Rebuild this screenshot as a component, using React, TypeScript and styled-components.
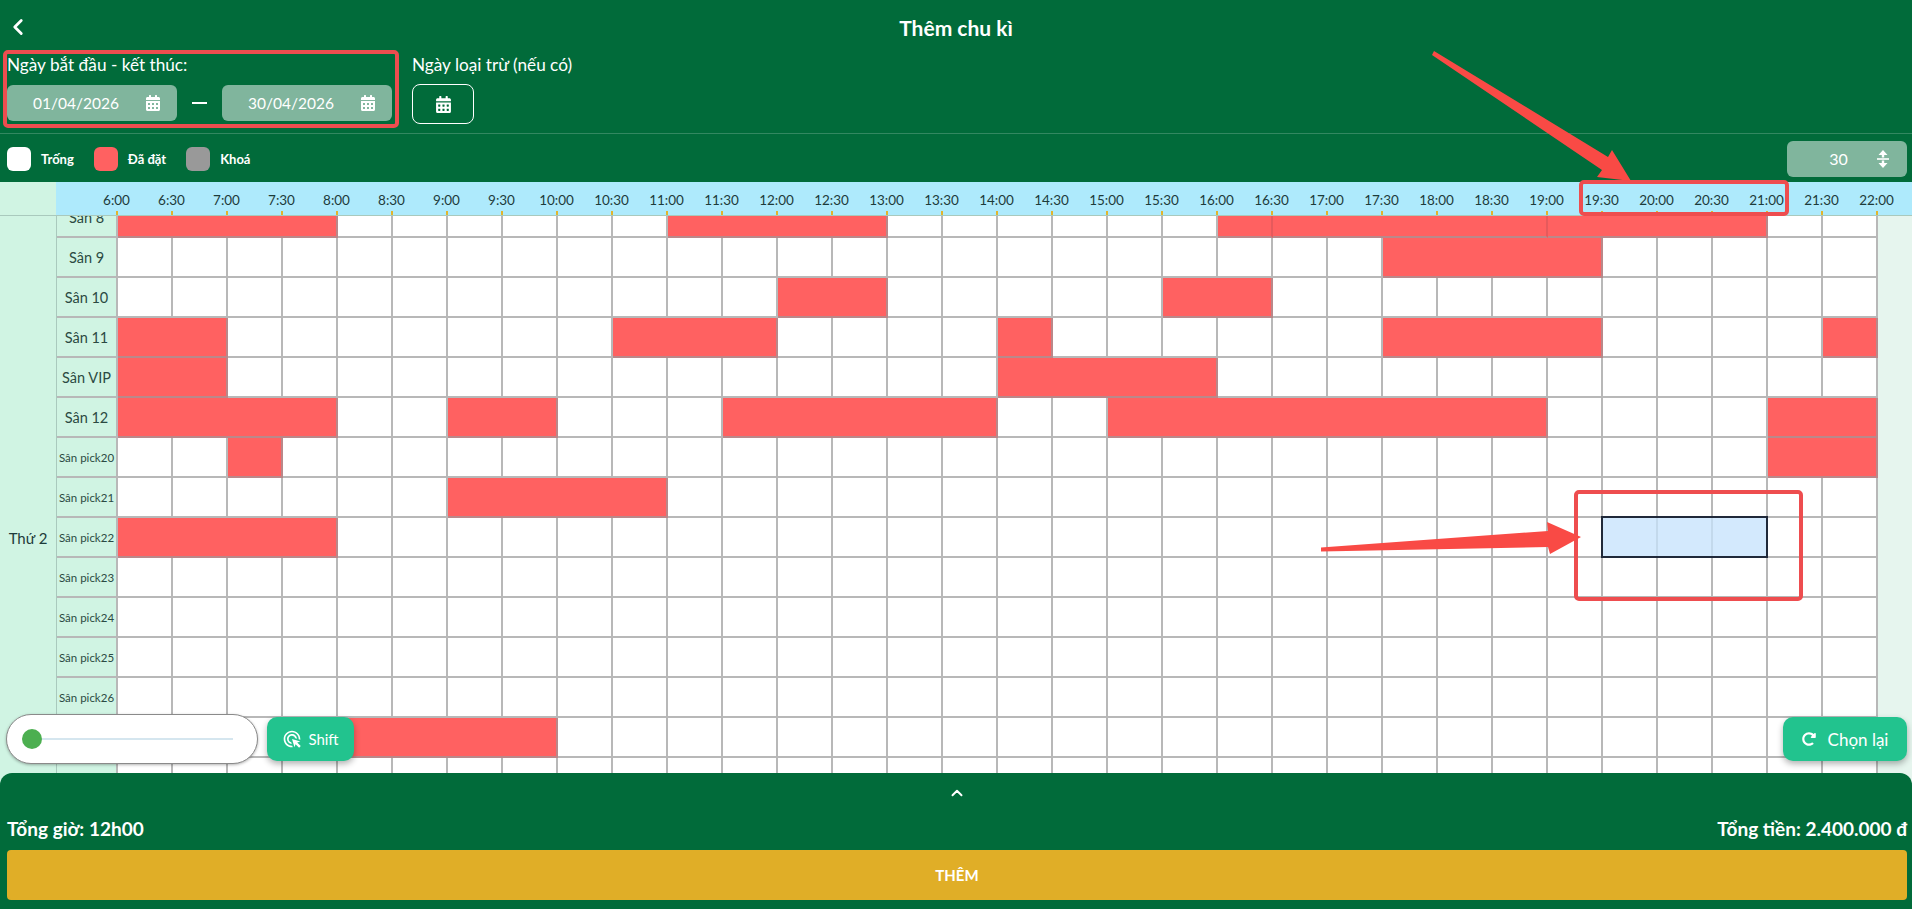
import styled, { createGlobalStyle } from "styled-components";
import { ChevronLeft, ChevronUp } from "lucide-react";
import { FaCalendarAlt, FaRedoAlt } from "react-icons/fa";
import { MdAdsClick } from "react-icons/md";

const GREEN = "#016b3a";
const RED = "#ff6161";
const LINE = "#b8b8b8";
const MINT = "#d0f4e3";
const TEAL = "#22c38e";

type Block = { from: number; to: number; joined?: boolean };

type Court = {
    name: string;
    small?: boolean;
    booked?: Block[];
    selected?: Block;
};

const courts: Court[] = [
    {
        name: "Sân 8",
        booked: [
            { from: 0, to: 4 },
            { from: 10, to: 14 },
            { from: 20, to: 21, joined: true },
            { from: 21, to: 26, joined: true },
            { from: 26, to: 30 },
        ],
    },
    { name: "Sân 9", booked: [{ from: 23, to: 27 }] },
    {
        name: "Sân 10",
        booked: [
            { from: 12, to: 14 },
            { from: 19, to: 21 },
        ],
    },
    {
        name: "Sân 11",
        booked: [
            { from: 0, to: 2 },
            { from: 9, to: 12 },
            { from: 16, to: 17 },
            { from: 23, to: 27 },
            { from: 31, to: 32 },
        ],
    },
    {
        name: "Sân VIP",
        booked: [
            { from: 0, to: 2 },
            { from: 16, to: 20 },
        ],
    },
    {
        name: "Sân 12",
        booked: [
            { from: 0, to: 4 },
            { from: 6, to: 8 },
            { from: 11, to: 16 },
            { from: 18, to: 26 },
            { from: 30, to: 32 },
        ],
    },
    {
        name: "Sân pick20",
        small: true,
        booked: [
            { from: 2, to: 3 },
            { from: 30, to: 32 },
        ],
    },
    { name: "Sân pick21", small: true, booked: [{ from: 6, to: 10 }] },
    {
        name: "Sân pick22",
        small: true,
        booked: [{ from: 0, to: 4 }],
        selected: { from: 27, to: 30 },
    },
    { name: "Sân pick23", small: true },
    { name: "Sân pick24", small: true },
    { name: "Sân pick25", small: true },
    { name: "Sân pick26", small: true },
    { name: "Sân pick27", small: true, booked: [{ from: 4, to: 8 }] },
    { name: "Sân pick28", small: true },
    { name: "Sân pick29", small: true },
    { name: "Sân pick30", small: true },
];

const timeLabels = Array.from({ length: 33 }, (_, i) => {
    const hour = 6 + Math.floor(i / 2);
    return `${hour}:${i % 2 ? "30" : "00"}`;
});

function CourtSlots({ court }: { court: Court }) {
    const slots = [];
    let slot = 0;
    while (slot < 32) {
        const booked = court.booked?.find((b) => b.from === slot);
        if (booked) {
            slots.push(
                <BookedSlot key={slot} $span={booked.to - booked.from} $joined={booked.joined} />
            );
            slot = booked.to;
        } else if (court.selected?.from === slot) {
            slots.push(
                <SelectedSlot key={slot} $span={court.selected.to - court.selected.from}>
                    <SelectedPart />
                    <SelectedPart />
                    <SelectedPart />
                </SelectedSlot>
            );
            slot = court.selected.to;
        } else {
            slots.push(<FreeSlot key={slot} />);
            slot += 1;
        }
    }
    return <SlotRow>{slots}</SlotRow>;
}

function StepperIcon() {
    return (
        <svg width="14" height="18" viewBox="0 0 14 18" fill="#fff">
            <path d="M7 0 11.5 5H8.2V7.4H5.8V5H2.5Z" />
            <rect x="1" y="8.2" width="12" height="1.6" />
            <path d="M7 18 11.5 13H8.2V10.6H5.8V13H2.5Z" />
        </svg>
    );
}

export default function App() {
    return (
        <Page>
            <GlobalStyle />
            <TopBar>
                <TitleBar>
                    <BackButton>
                        <ChevronLeft size={26} strokeWidth={2.6} />
                    </BackButton>
                    <Title>Thêm chu kì</Title>
                </TitleBar>
                <DateRow>
                    <Field>
                        <FieldLabel>Ngày bắt đầu - kết thúc:</FieldLabel>
                        <DateRange>
                            <DateInput>
                                <DateText>01/04/2026</DateText>
                                <FaCalendarAlt size={16} />
                            </DateInput>
                            <Dash />
                            <DateInput>
                                <DateText>30/04/2026</DateText>
                                <FaCalendarAlt size={16} />
                            </DateInput>
                        </DateRange>
                    </Field>
                    <Field>
                        <FieldLabel>Ngày loại trừ (nếu có)</FieldLabel>
                        <ExcludeButton>
                            <FaCalendarAlt size={17} />
                        </ExcludeButton>
                    </Field>
                </DateRow>
                <ToolRow>
                    <Legend>
                        <LegendItem>
                            <Swatch $color="#ffffff" />
                            Trống
                        </LegendItem>
                        <LegendItem>
                            <Swatch $color={RED} />
                            Đã đặt
                        </LegendItem>
                        <LegendItem>
                            <Swatch $color="#999999" />
                            Khoá
                        </LegendItem>
                    </Legend>
                    <StepInput>
                        <StepValue>30</StepValue>
                        <StepperIcon />
                    </StepInput>
                </ToolRow>
            </TopBar>

            <Board>
                <TimeHeader>
                    <HeaderCorner />
                    <TimeScale>
                        {timeLabels.map((label) => (
                            <TimeLabel key={label}>{label}</TimeLabel>
                        ))}
                    </TimeScale>
                </TimeHeader>
                <BoardBody>
                    <ScrollContent>
                        <DayColumn>Thứ 2</DayColumn>
                        <CourtList>
                            {courts.map((court) => (
                                <CourtRow key={court.name}>
                                    <CourtName $small={court.small}>{court.name}</CourtName>
                                    <CourtSlots court={court} />
                                </CourtRow>
                            ))}
                        </CourtList>
                    </ScrollContent>
                </BoardBody>
                <FloatBar>
                    <FloatGroup>
                        <ZoomSlider>
                            <SliderThumb />
                            <SliderTrack />
                        </ZoomSlider>
                        <ActionButton $width={87} $gap={6} $size={15}>
                            <MdAdsClick size={20} />
                            Shift
                        </ActionButton>
                    </FloatGroup>
                    <ActionButton $width={124} $gap={12} $size={17}>
                        <FaRedoAlt size={14} />
                        Chọn lại
                    </ActionButton>
                </FloatBar>
            </Board>

            <Footer>
                <Collapse>
                    <ChevronUp size={18} strokeWidth={2.6} />
                </Collapse>
                <Summary>
                    <span>Tổng giờ: 12h00</span>
                    <span>Tổng tiền: 2.400.000 đ</span>
                </Summary>
                <SubmitButton>THÊM</SubmitButton>
            </Footer>

            <MarkBox $left={3} $top={50} $width={396} $height={78} />
            <MarkBox $left={1579} $top={180} $width={210} $height={36} />
            <MarkBox $left={1574} $top={490} $width={229} $height={111} />
            <ArrowLayer viewBox="0 0 1912 909">
                <polygon points="1434,51 1608,157 1612,150 1631,181 1597,177 1602,170 1432,55" />
                <polygon points="1321,547.5 1548,531 1547,522 1581,537 1550,554 1548,547 1321,551.5" />
            </ArrowLayer>
        </Page>
    );
}

const GlobalStyle = createGlobalStyle`
    html, body {
        margin: 0;
        padding: 0;
        background: #fff;
    }
    * {
        box-sizing: border-box;
    }
    body {
        font-family: "Lato", "Noto Sans", sans-serif;
    }
`;

const Page = styled.div`
    position: relative;
    display: flex;
    flex-direction: column;
    width: 1912px;
    height: 909px;
    overflow: hidden;
    background: #e6f5ee;
`;

const TopBar = styled.header`
    flex: 0 0 182px;
    display: flex;
    flex-direction: column;
    background: ${GREEN};
    color: #fff;
`;

const TitleBar = styled.div`
    position: relative;
    flex: 0 0 51px;
    display: flex;
    align-items: center;
    justify-content: center;
    padding-top: 4px;
`;

const BackButton = styled.span`
    position: absolute;
    left: 5px;
    top: 14px;
    display: flex;
`;

const Title = styled.h1`
    margin: 0;
    font-size: 21px;
    font-weight: 700;
`;

const DateRow = styled.div`
    flex: 0 0 83px;
    display: flex;
    gap: 20px;
    padding: 2px 7px 0;
    border-bottom: 1px solid rgba(255, 255, 255, 0.2);
`;

const Field = styled.div`
    display: flex;
    flex-direction: column;
    gap: 9px;
`;

const FieldLabel = styled.label`
    font-size: 17.2px;
    line-height: 23px;
`;

const DateRange = styled.div`
    display: flex;
    align-items: center;
`;

const DateInput = styled.div`
    width: 170px;
    height: 36px;
    display: flex;
    align-items: center;
    padding-right: 16px;
    border-radius: 6px;
    background: rgba(255, 255, 255, 0.5);
`;

const DateText = styled.span`
    flex: 1;
    text-align: center;
    font-size: 15.5px;
`;

const Dash = styled.span`
    width: 15px;
    height: 2px;
    margin: 0 15px;
    background: #fff;
`;

const ExcludeButton = styled.button`
    width: 62px;
    height: 40px;
    margin-top: -1px;
    display: flex;
    align-items: center;
    justify-content: center;
    padding: 0;
    color: #fff;
    background: transparent;
    border: 1px solid #fff;
    border-radius: 8px;
`;

const ToolRow = styled.div`
    flex: 1;
    display: flex;
    align-items: center;
    justify-content: space-between;
    padding: 1px 5px 0 7px;
`;

const Legend = styled.div`
    display: flex;
    gap: 20px;
`;

const LegendItem = styled.div`
    display: flex;
    align-items: center;
    gap: 10px;
    font-size: 13px;
    font-weight: 700;
`;

const Swatch = styled.span<{ $color: string }>`
    width: 24px;
    height: 24px;
    border-radius: 6px;
    background: ${(p) => p.$color};
`;

const StepInput = styled.div`
    width: 120px;
    height: 36px;
    display: flex;
    align-items: center;
    padding-right: 17px;
    border-radius: 6px;
    background: rgba(255, 255, 255, 0.5);
`;

const StepValue = styled.span`
    flex: 1;
    padding-left: 14px;
    text-align: center;
    font-size: 16px;
`;

const Board = styled.main`
    position: relative;
    flex: 1;
    min-height: 0;
    margin-bottom: -14px;
    display: flex;
    flex-direction: column;
`;

const TimeHeader = styled.div`
    flex: 0 0 34px;
    display: flex;
    border-bottom: 1px solid #a9c9bd;
`;

const HeaderCorner = styled.div`
    width: 56px;
    background: ${MINT};
`;

const TimeScale = styled.div`
    flex: 1;
    display: flex;
    padding-left: 33px;
    background: #aeeafc;
`;

const TimeLabel = styled.div`
    position: relative;
    flex: 0 0 55px;
    padding-top: 9px;
    text-align: center;
    font-size: 13.5px;
    line-height: 18px;
    color: #1d3b3a;

    &::after {
        content: "";
        position: absolute;
        left: 27px;
        bottom: 0;
        width: 2px;
        height: 4px;
        background: #e2b52c;
    }
`;

const BoardBody = styled.div`
    flex: 1;
    min-height: 0;
    overflow: hidden;
`;

const ScrollContent = styled.div`
    display: flex;
    margin-top: -18px;
`;

const DayColumn = styled.div`
    flex: 0 0 57px;
    display: flex;
    align-items: center;
    justify-content: center;
    font-size: 15px;
    color: #1d3b3a;
    background: ${MINT};
    border-right: 1px solid #a9c9bd;
`;

const CourtList = styled.div`
    display: flex;
    flex-direction: column;
`;

const CourtRow = styled.div`
    display: flex;
    height: 40px;
`;

const CourtName = styled.div<{ $small?: boolean }>`
    flex: 0 0 61px;
    display: flex;
    align-items: center;
    justify-content: center;
    white-space: nowrap;
    font-size: ${(p) => (p.$small ? "11.5px" : "14.5px")};
    color: #2b4a42;
    background: ${MINT};
    border-right: 2px solid ${LINE};
    border-bottom: 2px solid ${LINE};
`;

const SlotRow = styled.div`
    display: grid;
    grid-template-columns: repeat(32, 55px);
`;

const FreeSlot = styled.div`
    background: #fff;
    border-right: 2px solid ${LINE};
    border-bottom: 2px solid ${LINE};
`;

const BookedSlot = styled.div<{ $span: number; $joined?: boolean }>`
    grid-column: span ${(p) => p.$span};
    background: ${RED};
    border-right: 2px solid ${(p) => (p.$joined ? "#e65a5c" : "#b9888a")};
    border-bottom: 2px solid #b9888a;
`;

const SelectedSlot = styled.div<{ $span: number }>`
    grid-column: span ${(p) => p.$span};
    display: flex;
    margin: -2px 0 0 -2px;
    background: #d3e9fd;
    border: 2px solid #20293a;
`;

const SelectedPart = styled.div`
    flex: 1;
    border-right: 2px solid #c3d9ec;

    &:last-child {
        border-right: none;
    }
`;

const FloatBar = styled.div`
    position: absolute;
    left: 6px;
    right: 5px;
    top: 532px;
    height: 50px;
    display: flex;
    align-items: center;
    justify-content: space-between;
`;

const FloatGroup = styled.div`
    display: flex;
    align-items: center;
    gap: 9px;
`;

const ZoomSlider = styled.div`
    width: 252px;
    height: 50px;
    display: flex;
    align-items: center;
    padding-left: 15px;
    background: #fff;
    border: 1px solid #8a8a8a;
    border-radius: 25px;
    box-shadow: 0 1px 3px rgba(0, 0, 0, 0.3);
`;

const SliderThumb = styled.span`
    width: 20px;
    height: 20px;
    border-radius: 50%;
    background: #4caf50;
`;

const SliderTrack = styled.span`
    width: 191px;
    height: 2px;
    background: #d5e6ef;
`;

const ActionButton = styled.button<{ $width: number; $gap: number; $size: number }>`
    width: ${(p) => p.$width}px;
    height: 44px;
    display: flex;
    align-items: center;
    justify-content: center;
    gap: ${(p) => p.$gap}px;
    padding: 0;
    font-family: inherit;
    font-size: ${(p) => p.$size}px;
    color: #fff;
    background: ${TEAL};
    border: none;
    border-radius: 10px;
    box-shadow: 0 3px 6px rgba(0, 0, 0, 0.3);
`;

const Footer = styled.footer`
    position: relative;
    flex: 0 0 136px;
    display: flex;
    flex-direction: column;
    padding: 0 5px 0 7px;
    color: #fff;
    background: ${GREEN};
    border-radius: 12px 12px 0 0;
`;

const Collapse = styled.div`
    height: 39px;
    display: flex;
    align-items: center;
    justify-content: center;
`;

const Summary = styled.div`
    height: 32px;
    display: flex;
    align-items: center;
    justify-content: space-between;
    font-size: 19px;
    font-weight: 700;
`;

const SubmitButton = styled.button`
    height: 50px;
    margin-top: 6px;
    padding: 0;
    font-family: inherit;
    font-size: 15px;
    font-weight: 700;
    color: #fff;
    background: #e0ae27;
    border: none;
    border-radius: 4px;
`;

const MarkBox = styled.div<{ $left: number; $top: number; $width: number; $height: number }>`
    position: absolute;
    left: ${(p) => p.$left}px;
    top: ${(p) => p.$top}px;
    width: ${(p) => p.$width}px;
    height: ${(p) => p.$height}px;
    border: 4px solid #ee4d4f;
    border-radius: 5px;
    pointer-events: none;
`;

const ArrowLayer = styled.svg`
    position: absolute;
    left: 0;
    top: 0;
    width: 1912px;
    height: 909px;
    fill: #f94a45;
    pointer-events: none;
`;
